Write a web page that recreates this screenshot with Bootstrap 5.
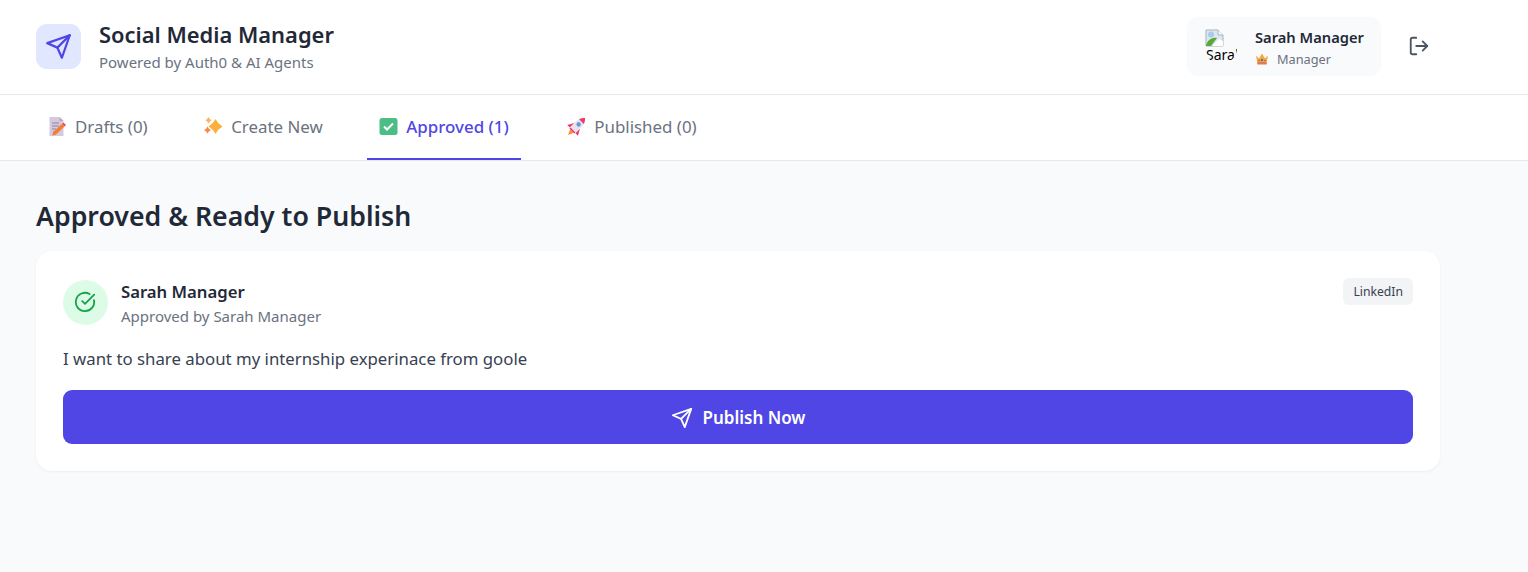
<!DOCTYPE html>
<html lang="en">
<head>
<meta charset="utf-8">
<title>Social Media Manager</title>
<link href="https://cdn.jsdelivr.net/npm/bootstrap@5.3.0/dist/css/bootstrap.min.css" rel="stylesheet">
<style>
html,body{height:100%}
body{font-family:"Noto Sans","Open Sans",sans-serif;background:#f9fafb;color:#1f2937;overflow:hidden}
.app-head{background:#fff;border-bottom:1px solid #e5e7eb;padding:17px 98px 18px 36px;height:95px}
.logo-box{width:45px;height:45px;border-radius:11px;background:#e0e7ff;color:#4f46e5;margin-right:18px}
.app-title{font-size:21.9px;font-weight:600;line-height:28px;margin:0;color:#1f2937}
.app-sub{font-size:15px;line-height:20px;color:#6b7280;margin-top:3px}
.user-chip{background:#f9fafb;border-radius:11px;height:59px;width:194px;padding:0 0 0 18px}
.broken-av{width:32px;height:36px;border-radius:0 0 16px 16px;overflow:hidden;position:relative;flex:none;margin:-2px 18px 0 0;background:#f9fafb}
.broken-av svg{position:absolute;left:0;top:0}
.broken-av span{position:absolute;left:1px;top:17px;width:32px;font-size:14px;line-height:20px;color:#000}
.user-name{font-size:14.7px;font-weight:600;line-height:20px;color:#1f2937;margin-top:1px;white-space:nowrap}
.user-role{font-size:12.75px;line-height:18px;color:#6b7280;margin-top:3px}
.logout-btn{color:#4b5563;margin-left:27px;width:22px;height:22px;margin-top:-1px}
.tab-bar{background:#fff;border-bottom:1px solid #e5e7eb;height:66px;padding:0 36px;gap:32.5px}
.tab-item{height:65px;padding:0 12px;color:#6b7280;font-size:16.9px;font-weight:400;gap:8px;border-bottom:2px solid transparent;margin-bottom:-1px}
.tab-item.on{color:#4f46e5;font-weight:500;font-size:16.9px;border-bottom-color:#4f46e5}
.tab-last{margin-left:2px}
.main-area{padding:35px 88px 0 36px}
.main-title{font-size:26.7px;font-weight:600;line-height:40px;margin:0 0 15px;color:#1f2937}
.post-box{background:#fff;border-radius:16px;padding:27px;height:220px;box-shadow:0 1px 3px rgba(0,0,0,.05);border:0}
.ok-av{width:45px;height:45px;border-radius:50%;background:#dcfce7;color:#16a34a;margin-right:13px;margin-top:2px}
.ok-av svg{margin:-2px 2px 0 0}
.post-name{font-size:16.7px;font-weight:600;line-height:24px;color:#1f2937;margin-top:2px}
.post-by{font-size:15px;line-height:20px;color:#6b7280;margin-top:2px}
.net-tag{font-size:12.2px;line-height:17px;padding:5px 10px;background:#f3f4f6;border-radius:6px;color:#374151;height:27px}
.post-text{font-size:16.8px;line-height:24px;color:#374151;margin:21px 0 19px}
.pub-btn{background:#4f46e5;color:#fff;border:0;border-radius:9px;height:54px;font-size:17px;font-weight:600;gap:10px;padding-top:8px}
.pub-btn:hover{background:#4f46e5;color:#fff}
</style>
</head>
<body>
<header class="app-head d-flex align-items-center justify-content-between">
  <div class="d-flex align-items-center">
    <div class="logo-box d-flex align-items-center justify-content-center">
      <svg width="27" height="27" viewBox="0 0 24 24" fill="none" stroke="currentColor" stroke-width="2" stroke-linecap="round" stroke-linejoin="round"><path d="M22 2 11 13"/><path d="M22 2 15 22l-4-9-9-4z"/></svg>
    </div>
    <div>
      <h1 class="app-title">Social Media Manager</h1>
      <div class="app-sub">Powered by Auth0 &amp; AI Agents</div>
    </div>
  </div>
  <div class="d-flex align-items-center">
    <div class="user-chip d-flex align-items-center">
      <div class="broken-av">
        <span>Sarah Manager</span>
        <svg width="20" height="20" viewBox="0 0 20 20"><path d="M1 2h12l5 5v11H1z" fill="#dfe6ee" stroke="#a9b2bc" stroke-width="1"/><path d="M13 2v5h5" fill="#fff" stroke="#a9b2bc"/><path d="M1 18c1-6 6-9 11-8l-6 8z" fill="#5aa83c"/><path d="M7 18l7-7 4 2v5z" fill="#fff"/><circle cx="6" cy="6.500" r="3" fill="#a9c9ee"/></svg>
      </div>
      <div>
        <div class="user-name">Sarah Manager</div>
        <div class="user-role d-flex align-items-center gap-2">
          <svg width="14" height="14" viewBox="0 0 14 14"><path d="M1 3.500l3 3L7 1.500l3 5 3-3-1.200 6.500H2.200z" fill="#f5a83c"/><rect x="2.200" y="10" width="9.600" height="2.500" rx=".6" fill="#e07b50"/><circle cx="7" cy="8" r="1.200" fill="#3a7bd5"/><circle cx="4" cy="8.500" r=".8" fill="#e0483e"/><circle cx="10" cy="8.500" r=".8" fill="#e0483e"/></svg>
          <span>Manager</span>
        </div>
      </div>
    </div>
    <div class="logout-btn d-flex">
      <svg width="22" height="22" viewBox="0 0 24 24" fill="none" stroke="currentColor" stroke-width="2" stroke-linecap="round" stroke-linejoin="round"><path d="M9 21H5a2 2 0 0 1-2-2V5a2 2 0 0 1 2-2h4"/><path d="m16 17 5-5-5-5"/><path d="M21 12H9"/></svg>
    </div>
  </div>
</header>
<nav class="tab-bar d-flex">
  <div class="tab-item d-flex align-items-center">
    <svg width="19" height="19" viewBox="0 0 19 19"><path d="M1.500 0h10l4 4v15h-14z" fill="#d6c9df"/><path d="M11.500 0v4h4z" fill="#b7a6c4"/><path d="M4 6h7M4 9h7M4 12h4" stroke="#8d8399" stroke-width="1"/><path d="M5 15l9-8 2.500 2.500-8.500 8-3.500 1z" fill="#f0802e"/><path d="M14 7l1.500-1.500 2.500 2.500-1.500 1.500z" fill="#ee4a5a"/></svg>
    <span>Drafts (0)</span>
  </div>
  <div class="tab-item d-flex align-items-center">
    <svg width="19" height="19" viewBox="0 0 19 19"><path d="M11.500 2Q14 7 18.500 9.500 14 12 11.500 17 9 12 4.500 9.500 9 7 11.500 2z" fill="#fbb03b"/><path d="M4.500 0Q5.500 2.200 7.500 3.200 5.500 4.200 4.500 6.400 3.500 4.200 1.500 3.200 3.500 2.200 4.500 0z" fill="#f9b257"/><path d="M3.500 9.500Q4.500 12 7 13 4.500 14 3.500 16.500 2.500 14 0 13 2.500 12 3.500 9.500z" fill="#f58a4a"/></svg>
    <span>Create New</span>
  </div>
  <div class="tab-item on d-flex align-items-center">
    <svg width="19" height="19" viewBox="0 0 19 19"><rect x=".5" y="1" width="18" height="17" rx="2.500" fill="#4cbd84"/><path d="M5 9.500l3 3 6-6" fill="none" stroke="#fff" stroke-width="2"/></svg>
    <span>Approved (1)</span>
  </div>
  <div class="tab-item tab-last d-flex align-items-center">
    <svg width="19" height="19" viewBox="0 0 19 19"><g transform="rotate(45 9.500 9.500) translate(0 -.5)"><path d="M7 16.500h5L9.500 22z" fill="#f2912e"/><path d="M5.500 9 2 15.500h3.500zM13.500 9 17 15.500h-3.500z" fill="#ee2f72"/><path d="M9.500-2C13 1 13.500 6 13.500 9v6h-8V9C5.500 6 6 1 9.500-2z" fill="#e8e2ec"/><path d="M9.500-2c1.700 1.500 2.800 3.200 3.300 5H6.200C6.700 1.200 7.800-.5 9.500-2z" fill="#f0386b"/><circle cx="9.500" cy="7" r="2.200" fill="#5aa0e0"/><rect x="6" y="15" width="7" height="1.500" fill="#ee2f72"/></g></svg>
    <span>Published (0)</span>
  </div>
</nav>
<main class="main-area">
  <h2 class="main-title">Approved &amp; Ready to Publish</h2>
  <article class="post-box d-flex flex-column">
    <div class="d-flex justify-content-between align-items-start">
      <div class="d-flex">
        <div class="ok-av d-flex align-items-center justify-content-center">
          <svg width="22" height="22" viewBox="0 0 24 24" fill="none" stroke="currentColor" stroke-width="2" stroke-linecap="round" stroke-linejoin="round"><path d="M21.800 10A10 10 0 1 1 17 3.340"/><path d="m9 11 3 3L22 4"/></svg>
        </div>
        <div>
          <div class="post-name">Sarah Manager</div>
          <div class="post-by">Approved by Sarah Manager</div>
        </div>
      </div>
      <span class="net-tag">LinkedIn</span>
    </div>
    <p class="post-text">I want to share about my internship experinace from goole</p>
    <button class="btn pub-btn w-100 d-flex align-items-center justify-content-center" type="button">
      <svg width="22" height="22" viewBox="0 0 24 24" fill="none" stroke="currentColor" stroke-width="2" stroke-linecap="round" stroke-linejoin="round"><path d="M22 2 11 13"/><path d="M22 2 15 22l-4-9-9-4z"/></svg>
      <span>Publish Now</span>
    </button>
  </article>
</main>
<script src="https://cdn.jsdelivr.net/npm/bootstrap@5.3.0/dist/js/bootstrap.bundle.min.js"></script>
</body>
</html>
